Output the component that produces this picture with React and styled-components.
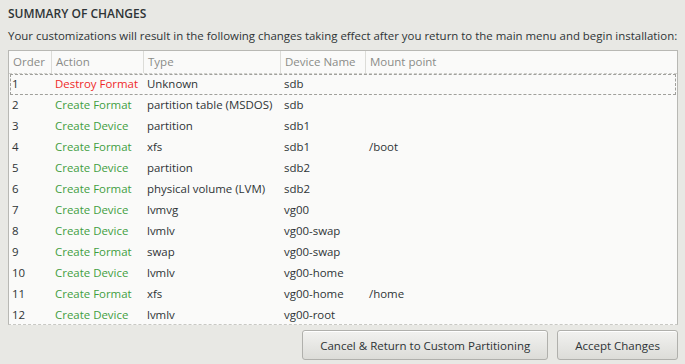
import React from "react";
import styled, { createGlobalStyle } from "styled-components";

const GlobalStyle = createGlobalStyle`
  html, body {
    margin: 0;
    padding: 0;
    background: #e8e8e4;
  }
  body {
    font-family: "Open Sans", "DejaVu Sans", sans-serif;
    color: #2e3436;
  }
`;

const changes = [
  { order: 1, action: "Destroy Format", type: "Unknown", device: "sdb", mount: "", destroy: true },
  { order: 2, action: "Create Format", type: "partition table (MSDOS)", device: "sdb", mount: "" },
  { order: 3, action: "Create Device", type: "partition", device: "sdb1", mount: "" },
  { order: 4, action: "Create Format", type: "xfs", device: "sdb1", mount: "/boot" },
  { order: 5, action: "Create Device", type: "partition", device: "sdb2", mount: "" },
  { order: 6, action: "Create Format", type: "physical volume (LVM)", device: "sdb2", mount: "" },
  { order: 7, action: "Create Device", type: "lvmvg", device: "vg00", mount: "" },
  { order: 8, action: "Create Device", type: "lvmlv", device: "vg00-swap", mount: "" },
  { order: 9, action: "Create Format", type: "swap", device: "vg00-swap", mount: "" },
  { order: 10, action: "Create Device", type: "lvmlv", device: "vg00-home", mount: "" },
  { order: 11, action: "Create Format", type: "xfs", device: "vg00-home", mount: "/home" },
  { order: 12, action: "Create Device", type: "lvmlv", device: "vg00-root", mount: "" },
];

const columns = ["Order", "Action", "Type", "Device Name", "Mount point"];

export default function App() {
  return (
    <>
      <GlobalStyle />
      <Dialog>
        <Title>SUMMARY OF CHANGES</Title>
        <Subtitle>
          Your customizations will result in the following changes taking effect after you
          return to the main menu and begin installation:
        </Subtitle>
        <TableFrame>
          <HeaderRow>
            {columns.map((c, i) => (
              <HeaderCell key={c} last={i === columns.length - 1}>
                {c}
              </HeaderCell>
            ))}
          </HeaderRow>
          <Body>
            {changes.map((row, i) => (
              <Row key={row.order} focused={i === 0}>
                <Cell>{row.order}</Cell>
                <ActionCell destroy={row.destroy}>{row.action}</ActionCell>
                <Cell>{row.type}</Cell>
                <Cell>{row.device}</Cell>
                <Cell>{row.mount}</Cell>
              </Row>
            ))}
          </Body>
        </TableFrame>
        <ButtonBar>
          <Button>Cancel &amp; Return to Custom Partitioning</Button>
          <Button>Accept Changes</Button>
        </ButtonBar>
      </Dialog>
    </>
  );
}

const Dialog = styled.div`
  width: 685px;
  height: 364px;
  box-sizing: border-box;
  padding: 6px 7px 0 8px;
  overflow: hidden;
`;

const Title = styled.div`
  font-size: 12px;
  font-weight: 600;
  line-height: 16px;
`;

const Subtitle = styled.div`
  margin-top: 6px;
  font-size: 11.45px;
  line-height: 16px;
  white-space: nowrap;
`;

const TableFrame = styled.div`
  margin-top: 6px;
  height: 275px;
  box-sizing: border-box;
  border: 1px solid #b8b8b4;
  border-bottom: 1px dashed #c8c8c4;
  background: #fafaf9;
  overflow: hidden;
`;

const grid = `
  display: grid;
  grid-template-columns: 43px 92px 137px 85px 1fr;
`;

const HeaderRow = styled.div`
  ${grid}
  height: 22px;
  border-bottom: 1px dashed #d0d0cc;
`;

const HeaderCell = styled.div`
  padding-left: 4px;
  font-size: 11.5px;
  line-height: 21px;
  color: #8a8c88;
  border-right: ${(p) => (p.last ? "none" : "1px solid #dcdcd8")};
  white-space: nowrap;
  overflow: hidden;
`;

const Body = styled.div``;

const Row = styled.div`
  ${grid}
  height: 21px;
  margin: 0 1px;
  outline: ${(p) => (p.focused ? "1px dashed #a0a09c" : "none")};
  outline-offset: -1px;
`;

const Cell = styled.div`
  padding-left: 2px;
  font-size: 11.45px;
  line-height: 19px;
  white-space: nowrap;
`;

const ActionCell = styled(Cell)`
  color: ${(p) => (p.destroy ? "#ef2929" : "#3f9e3f")};
`;

const ButtonBar = styled.div`
  display: flex;
  justify-content: flex-end;
  gap: 9px;
  margin-top: 5px;
`;

const Button = styled.button`
  height: 30px;
  padding: 0 17px;
  font-family: inherit;
  font-size: 11.5px;
  color: #2e3436;
  border: 1px solid #b0b0ac;
  border-radius: 3px;
  background: linear-gradient(#f2f2f0, #dcdcd8);
  box-shadow: inset 0 1px 0 #ffffff;
`;
